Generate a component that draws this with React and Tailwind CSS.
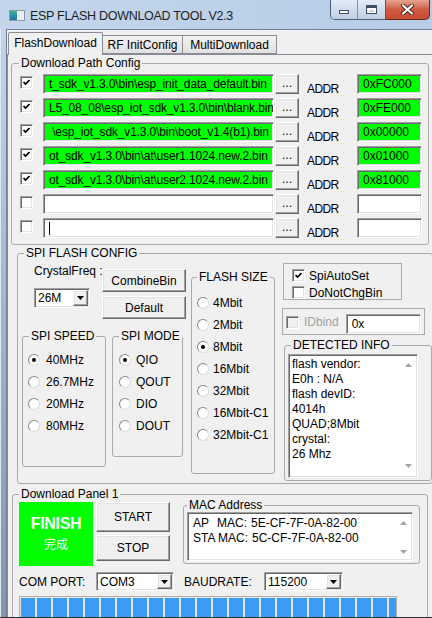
import React from "react";

const sunken =
  "border border-t-[#a0a0a0] border-l-[#a0a0a0] border-b-white border-r-white shadow-[inset_1px_1px_0_#696969,inset_-1px_-1px_0_#e3e3e3]";
const raised =
  "border border-t-white border-l-white border-b-[#696969] border-r-[#696969] shadow-[inset_-1px_-1px_0_#a0a0a0,inset_1px_1px_0_#e3e3e3] bg-[#f0f0f0]";

const rows = [
  { path: "t_sdk_v1.3.0\\bin\\esp_init_data_default.bin", addr: "0xFC000" },
  { path: "L5_08_08\\esp_iot_sdk_v1.3.0\\bin\\blank.bin", addr: "0xFE000" },
  { path: " \\esp_iot_sdk_v1.3.0\\bin\\boot_v1.4(b1).bin", addr: "0x00000" },
  { path: "ot_sdk_v1.3.0\\bin\\at\\user1.1024.new.2.bin", addr: "0x01000" },
  { path: "ot_sdk_v1.3.0\\bin\\at\\user2.1024.new.2.bin", addr: "0x81000" },
  { path: "", addr: "" },
  { path: "", addr: "", cursor: true },
];

const detected = ["flash vendor:", "E0h : N/A", "flash devID:", "4014h", "QUAD;8Mbit", "crystal:", "26 Mhz"];

function Check({ on, disabled }) {
  return (
    <span className={`w-[13px] h-[13px] shrink-0 flex items-center justify-center ${sunken} ${disabled ? "bg-[#f0f0f0]" : "bg-white"}`}>
      {on && (
        <svg width="7" height="7" viewBox="0 0 7 7">
          <path d="M0.5 3 L2.5 5 L6.5 1" stroke="#000" strokeWidth="1.7" fill="none" />
        </svg>
      )}
    </span>
  );
}

function Radio({ on }) {
  return (
    <span className="w-[12px] h-[12px] shrink-0 rounded-full border border-t-[#8a8a8a] border-l-[#8a8a8a] border-b-[#dcdcdc] border-r-[#dcdcdc] bg-white flex items-center justify-center">
      {on && <span className="w-[4px] h-[4px] rounded-full bg-black" />}
    </span>
  );
}

function Arrow({ up, color }) {
  return (
    <svg width="7" height="4" viewBox="0 0 7 4">
      <path d={up ? "M0 4 L3.5 0 L7 4 Z" : "M0 0 L7 0 L3.5 4 Z"} fill={color} />
    </svg>
  );
}

function Combo({ value, className }) {
  return (
    <div className={`flex items-stretch bg-white ${sunken} ${className}`}>
      <span className="flex-1 pl-[3px] flex items-center">{value}</span>
      <span className={`w-[15px] m-[1px] flex items-center justify-center ${raised}`}>
        <Arrow color="#000" />
      </span>
    </div>
  );
}

function Group({ label, className, legendClass, children }) {
  return (
    <fieldset className={`border border-[#a9a9a9] rounded-[3px] shrink-0 ${className}`}>
      {label && <legend className={`px-[2px] leading-[14px] whitespace-nowrap ${legendClass}`}>{label}</legend>}
      {children}
    </fieldset>
  );
}

function Btn({ children, className }) {
  return <div className={`flex items-center justify-center shrink-0 ${raised} ${className}`}>{children}</div>;
}

export default function App() {
  return (
    <div className="w-[432px] h-[618px] overflow-hidden flex flex-col bg-gradient-to-b from-[#c6d8ee] to-[#8195ad] font-['Liberation_Sans','Noto_Sans_CJK_SC',Arial,sans-serif] text-[12px] text-black leading-[14px]">
      {/* title bar */}
      <div className="h-[29px] shrink-0 flex items-start bg-gradient-to-r from-[#c3d6ec] to-[#b7cce6]">
        <div className="mt-[10px] ml-[9px] w-[16px] h-[11px] border border-[#8a98a8] bg-[#e8eef4] flex">
          <span className="w-[7px] h-full bg-gradient-to-b from-[#3fae8f] to-[#2a6fb0]" />
          <span className="w-[1px] h-full bg-[#ffffff]" />
        </div>
        <span className="ml-[5px] mt-[9px] text-[12.5px] leading-[14px] tracking-[-0.3px] text-[#1e1e1e]">ESP FLASH DOWNLOAD TOOL V2.3</span>
        <div className="ml-auto flex h-[20px] mr-[2px]">
          <div className="flex border border-t-0 border-[#4c5f7a] rounded-bl-[5px] overflow-hidden">
            <div className="w-[27px] h-full bg-gradient-to-b from-[#e4ecf6] to-[#bfcfe3] flex items-end justify-center pb-[5px] border-r border-[#7f90a8]">
              <span className="w-[10px] h-[4px] bg-white border border-[#3c4d66]" />
            </div>
            <div className="w-[27px] h-full bg-gradient-to-b from-[#e4ecf6] to-[#bfcfe3] flex items-center justify-center">
              <span className="w-[11px] h-[9px] bg-white border border-[#3c4d66] border-t-[3px] flex items-center justify-center">
                <span className="w-[5px] h-[2px] bg-[#c9d4e2]" />
              </span>
            </div>
          </div>
          <div className="w-[44px] h-full border border-t-0 border-l-0 border-[#6b2a20] rounded-br-[5px] bg-gradient-to-b from-[#e6a594] via-[#cf5a42] to-[#c74b30] flex items-center justify-center">
            <svg width="13" height="11" viewBox="0 0 13 11">
              <path d="M2 1.5 L11 9.5 M11 1.5 L2 9.5" stroke="#4a2018" strokeWidth="4" strokeLinecap="round" />
              <path d="M2 1.5 L11 9.5 M11 1.5 L2 9.5" stroke="#ffffff" strokeWidth="2.2" strokeLinecap="round" />
            </svg>
          </div>
        </div>
      </div>

      {/* body */}
      <div className="flex-1 flex min-h-0">
        <div className="w-[6px] shrink-0 border-l border-[#dde8f5]" />
        <div className="flex-1 flex flex-col bg-[#f0f0f0] border-l border-t border-[#6f8099] min-w-0">
          {/* tab strip */}
          <div className="h-[24px] shrink-0 flex items-end pl-[1px]">
            <div className="h-[23px] w-[95px] -mb-px relative z-10 border border-b-0 border-[#898c95] bg-[#f0f0f0] flex items-center justify-center pb-[2px] rounded-t-[2px]">
              FlashDownload
            </div>
            <div className="h-[19px] w-[80px] border border-l-0 border-[#898c95] bg-gradient-to-b from-[#f3f3f3] to-[#e1e1e1] flex items-center justify-center">
              RF InitConfig
            </div>
            <div className="h-[19px] w-[94px] border border-l-0 border-[#898c95] bg-gradient-to-b from-[#f3f3f3] to-[#e1e1e1] flex items-center justify-center">
              MultiDownload
            </div>
          </div>

          {/* tab page */}
          <div className="flex-1 border-l border-t border-[#898c95] flex flex-col min-h-0 overflow-hidden">
            {/* Download Path Config */}
            <Group label="Download Path Config" className="mt-[1px] ml-[3px] w-[418px] h-[189px]" legendClass="ml-[7px]">
              <div className="flex flex-col pt-[4px] gap-[4px]">
                {rows.map((r, i) => (
                  <div key={i} className="flex items-start pl-[8px] h-[20px]">
                    <span className="mt-[2px]">
                      <Check on={r.path !== ""} />
                    </span>
                    <div className={`ml-[10px] w-[231px] h-[20px] shrink-0 flex items-center overflow-hidden whitespace-pre pl-[5px] text-[12px] tracking-[-0.15px] ${sunken} ${r.path ? "bg-[#00ff00]" : "bg-white"}`}>
                      {r.path}
                      {r.cursor && <span className="w-[1px] h-[13px] bg-black" />}
                    </div>
                    <Btn className="ml-[1px] w-[24px] h-[20px] pb-[3px]">...</Btn>
                    <div className="w-[58px] shrink-0 pl-[8px] pt-[8px] tracking-[-0.6px]">ADDR</div>
                    <div className={`w-[65px] h-[20px] shrink-0 flex items-center pl-[5px] ${sunken} ${r.addr ? "bg-[#00ff00]" : "bg-white"}`}>
                      {r.addr}
                    </div>
                  </div>
                ))}
              </div>
            </Group>

            {/* SPI FLASH CONFIG */}
            <Group label="SPI FLASH CONFIG" className="mt-[1px] ml-[9px] w-[410px] h-[238px]" legendClass="ml-[6px]">
              <div className="flex items-start">
                {/* column A */}
                <div className="ml-[4px] w-[164px] shrink-0 flex flex-col">
                  <div className="flex items-start">
                    <div className="ml-[12px] w-[56px] shrink-0 flex flex-col">
                      <span className="pt-[4px] whitespace-nowrap">CrystalFreq :</span>
                      <Combo value="26M" className="mt-[10px] w-[56px] h-[20px]" />
                    </div>
                    <div className="ml-[12px] pt-[9px] flex flex-col gap-[4px]">
                      <Btn className="w-[84px] h-[23px]">CombineBin</Btn>
                      <Btn className="w-[84px] h-[23px]">Default</Btn>
                    </div>
                  </div>
                  <div className="flex items-start mt-[10px]">
                    <Group label="SPI SPEED" className="w-[84px] h-[138px]" legendClass="ml-[6px]">
                      <div className="flex flex-col pt-[9px] gap-[6px] pl-[5px]">
                        {["40MHz", "26.7MHz", "20MHz", "80MHz"].map((t, i) => (
                          <div key={t} className="h-[16px] flex items-center gap-[6px]">
                            <Radio on={i === 0} />
                            <span>{t}</span>
                          </div>
                        ))}
                      </div>
                    </Group>
                    <Group label="SPI MODE" className="ml-[6px] w-[71px] h-[128px]" legendClass="ml-[6px]">
                      <div className="flex flex-col pt-[9px] gap-[6px] pl-[6px]">
                        {["QIO", "QOUT", "DIO", "DOUT"].map((t, i) => (
                          <div key={t} className="h-[16px] flex items-center gap-[5px]">
                            <Radio on={i === 0} />
                            <span>{t}</span>
                          </div>
                        ))}
                      </div>
                    </Group>
                  </div>
                </div>

                {/* column B */}
                <Group label="FLASH SIZE" className="ml-[5px] mt-[10px] w-[78px] h-[204px]" legendClass="ml-[5px]">
                  <div className="flex flex-col pt-[8px]">
                    {["4Mbit", "2Mbit", "8Mbit", "16Mbit", "32Mbit", "16Mbit-C1", "32Mbit-C1"].map((t, i) => (
                      <div key={t} className="h-[22px] w-[82px] pl-[5px] bg-[#f0f0f0] flex items-center gap-[4px] relative">
                        <Radio on={i === 2} />
                        <span className="whitespace-nowrap">{t}</span>
                      </div>
                    ))}
                  </div>
                </Group>

                {/* column C */}
                <div className="ml-[7px] flex flex-col">
                  <div className="ml-[1px] mt-[3px] w-[119px] h-[37px] border border-[#a9a9a9] flex flex-col pl-[8px] pt-[5px] gap-[4px]">
                    <div className="flex items-center gap-[4px] h-[13px]">
                      <Check on />
                      <span>SpiAutoSet</span>
                    </div>
                    <div className="flex items-center gap-[4px] h-[13px]">
                      <Check />
                      <span>DoNotChgBin</span>
                    </div>
                  </div>
                  <div className="mt-[8px] w-[143px] h-[27px] border border-[#a9a9a9] flex items-end pl-[3px]">
                    <div className="flex items-center gap-[5px] mb-[5px]">
                      <Check disabled />
                      <span className="text-[#a0a0a0]">IDbind</span>
                    </div>
                    <div className={`ml-[7px] w-[75px] h-[20px] bg-white flex items-center pl-[5px] ${sunken}`}>0x</div>
                  </div>
                  <Group label="DETECTED INFO" className="ml-[2px] mt-[3px] w-[148px] h-[143px]" legendClass="ml-[6px]">
                    <div className={`ml-[3px] mt-[2px] w-[130px] h-[124px] bg-white flex ${sunken}`}>
                      <div className="flex-1 flex flex-col pl-[3px] pt-[2px] leading-[15px]">
                        {detected.map((t) => (
                          <span key={t}>{t}</span>
                        ))}
                      </div>
                      <div className="w-[17px] flex flex-col items-center justify-between pt-[8px] pb-[9px]">
                        <Arrow up color="#a3a3a3" />
                        <Arrow color="#a3a3a3" />
                      </div>
                    </div>
                  </Group>
                </div>
              </div>
            </Group>

            {/* Download Panel 1 */}
            <Group label="Download Panel 1" className="mt-[3px] ml-[4px] w-[416px] h-[200px]" legendClass="ml-[6px]">
              <div className="flex items-start">
                <div className="ml-[6px] mt-[1px] w-[74px] h-[64px] bg-[#00ff00] text-white flex flex-col items-center">
                  <span className="mt-[13px] text-[16px] leading-[18px] font-bold tracking-[-0.3px]">FINISH</span>
                  <span className="mt-[5px] text-[12px] leading-[14px]">完成</span>
                </div>
                <div className="ml-[3px] mt-[1px] flex flex-col gap-[3px]">
                  <Btn className="w-[74px] h-[30px]">START</Btn>
                  <Btn className="w-[74px] h-[26px]">STOP</Btn>
                </div>
                <Group label="MAC Address" className="ml-[13px] -mt-[3px] w-[237px] h-[66px]" legendClass="ml-[3px]">
                  <div className={`ml-[3px] w-[226px] h-[49px] bg-white flex ${sunken}`}>
                    <div className="flex-1 flex flex-col pl-[5px] pt-[3px] leading-[15px]">
                      <div className="flex">
                        <span className="w-[24px]">AP</span>
                        <span className="w-[34px]">MAC:</span>
                        <span>5E-CF-7F-0A-82-00</span>
                      </div>
                      <div className="flex">
                        <span className="w-[25px]">STA</span>
                        <span className="w-[34px]">MAC:</span>
                        <span>5C-CF-7F-0A-82-00</span>
                      </div>
                    </div>
                    <div className="w-[17px] flex flex-col items-center justify-between pt-[8px] pb-[6px]">
                      <Arrow up color="#a3a3a3" />
                      <Arrow color="#a3a3a3" />
                    </div>
                  </div>
                </Group>
              </div>
              <div className="flex items-center mt-[6px] h-[19px]">
                <span className="ml-[6px] w-[77px]">COM PORT:</span>
                <Combo value="COM3" className="w-[78px] h-[19px]" />
                <span className="ml-[10px] w-[80px]">BAUDRATE:</span>
                <Combo value="115200" className="w-[79px] h-[19px]" />
              </div>
              <div className="ml-[6px] mt-[5px] w-[378px] h-[30px] border border-[#b0b0b0] bg-[#e6e6e6] flex gap-[2px] pl-[1px] pt-[1px] overflow-hidden">
                {Array.from({ length: 24 }).map((_, i) => (
                  <span key={i} className="w-[14px] h-full shrink-0 bg-[#3c9cf5]" />
                ))}
              </div>
            </Group>
          </div>
        </div>
      </div>
      <div className="h-[1px] shrink-0 bg-[#2f2f2f]" />
    </div>
  );
}
